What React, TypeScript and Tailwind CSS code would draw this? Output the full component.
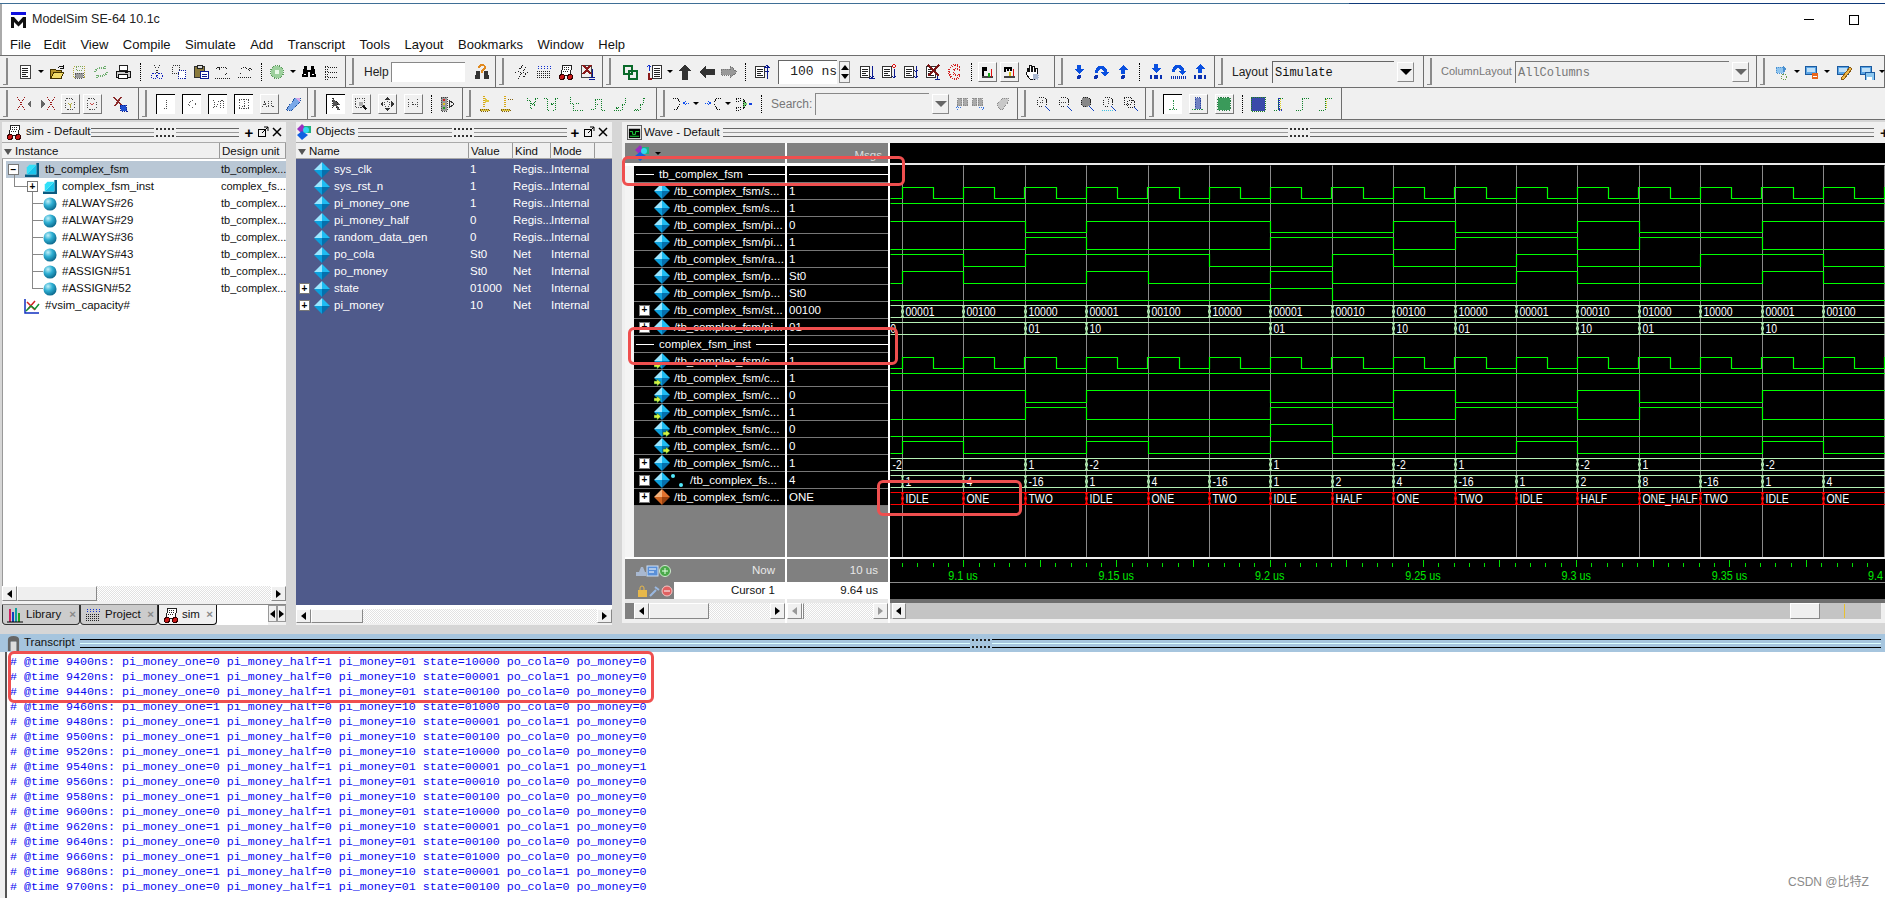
import type { ReactNode } from 'react'

const DOT = '1 1'

const Svg = ({ children, size = 'w-4 h-4' }: { children: ReactNode; size?: string }) => (
  <svg viewBox="0 0 16 16" className={size} fill="none" shapeRendering="crispEdges">
    {children}
  </svg>
)

const docLines = (
  <>
    <rect x="1.5" y="2.5" width="9" height="11" fill="#fff" stroke="#333" />
    <path d="M3 5h6M3 7h6M3 9h4M3 11h6" stroke="#222" />
  </>
)

// toolbar icons, drawn by hand on a 16x16 grid
const icons: Record<string, ReactNode> = {
  doc: (
    <>
      <rect x="3.5" y="1.5" width="10" height="13" fill="#fff" stroke="#444" />
      <path d="M5 4h6M5 6h6M5 8h6M5 10h4M5 12h6" stroke="#222" />
    </>
  ),
  folder: (
    <>
      <path d="M1 5h5l1 1h5v8H1z" fill="#b8962c" stroke="#443300" />
      <path d="M2 14 5 8h10l-3 6z" fill="#f2dc6a" stroke="#443300" />
      <path d="M9 4Q11 1 14 3M14 1v3h-3" stroke="#111" />
    </>
  ),
  save: (
    <>
      <rect x="2.5" y="2.5" width="11" height="11" stroke="#b5a83c" strokeDasharray={DOT} />
      <rect x="5" y="2" width="6" height="4" stroke="#79a35a" strokeDasharray={DOT} />
      <rect x="4" y="9" width="8" height="5" fill="#999" stroke="#555" strokeDasharray={DOT} />
    </>
  ),
  refresh: (
    <>
      <path d="M2 8Q4 3 11 4M12 2v4M14 8Q12 13 5 12M4 14v-4" stroke="#6fae6f" strokeWidth="2" strokeDasharray={DOT} />
    </>
  ),
  print: (
    <>
      <rect x="4.5" y="1.5" width="8" height="5" fill="#fff" stroke="#222" />
      <path d="M1 7h14v6H1z" fill="#ccc" stroke="#111" />
      <rect x="3" y="10" width="9" height="4" fill="#fff" stroke="#111" />
      <path d="M10 8h3" stroke="#111" />
    </>
  ),
  cut: (
    <>
      <path d="M5 1l4 8M11 1 7 9" stroke="#333" strokeDasharray={DOT} />
      <circle cx="5" cy="12" r="2.5" stroke="#1020c0" strokeDasharray={DOT} />
      <circle cx="11" cy="12" r="2.5" stroke="#1020c0" strokeDasharray={DOT} />
    </>
  ),
  copy: (
    <>
      <rect x="1.5" y="1.5" width="7" height="8" stroke="#333" strokeDasharray={DOT} />
      <rect x="7.5" y="6.5" width="7" height="8" fill="#fff" stroke="#1020a0" strokeDasharray={DOT} />
    </>
  ),
  paste: (
    <>
      <rect x="1.5" y="2.5" width="10" height="11" fill="#8a7a3c" stroke="#333" />
      <rect x="4" y="1" width="5" height="3" fill="#ddd" stroke="#222" />
      <rect x="7.5" y="7.5" width="8" height="7" fill="#fff" stroke="#0a1a90" />
      <path d="M9 10h5M9 12h5" stroke="#0a1a90" />
    </>
  ),
  undo: <path d="M1 5l3-2v4M4 5Q11 1 13 6Q14 10 8 11M0 14h15" stroke="#222" strokeDasharray={DOT} />,
  redo: <path d="M15 6l-3-2v4M12 6Q6 1 3 6Q2 9 4 10M1 13h14" stroke="#222" strokeDasharray={DOT} />,
  compile: (
    <>
      <circle cx="8" cy="8" r="6.5" fill="#9dd09d" stroke="#5a9a5a" strokeDasharray={DOT} />
      <circle cx="8" cy="8" r="2.5" fill="#e8f8e8" />
    </>
  ),
  binoc: (
    <>
      <path d="M3 2h3v4h4V2h3l2 11H9V8H7v5H1z" fill="#000" />
      <path d="M3 10h2M11 10h2" stroke="#fff" />
    </>
  ),
  findList: (
    <path d="M2 2h3v3H2zM2 7h3v3H2zM2 12h3v3H2zM7 3h7M7 8h7M7 13h7" stroke="#222" strokeDasharray={DOT} />
  ),
  helpQ: (
    <>
      <path d="M2 7h4v8H1zM10 7h4l1 8h-5z" fill="#333" />
      <path d="M4 4Q4 0 8 0T12 4Q12 6 9 7V9H7V6Q10 5 10 3.5T8 2 6 4z" fill="#e08a20" />
    </>
  ),
  zig: <path d="M9 1 4 7l4 2-4 6M12 3l-3 5 3 2-3 4M1 8h2M13 8h2" stroke="#222" strokeDasharray={DOT} />,
  grid: (
    <>
      <path d="M2 2v3M5 2v3M8 2v3M11 2v3M14 2v3" stroke="#1030d0" strokeDasharray={DOT} />
      <path d="M1 7h14M1 9h14M1 11h14M1 13h14" stroke="#222" strokeDasharray={DOT} />
    </>
  ),
  simIcon: (
    <>
      <path d="M5 1h9l-2 10H3z" fill="#fff" stroke="#222" />
      <path d="M6 3h6M6 5h5M5 7h6" stroke="#222" strokeDasharray={DOT} />
      <circle cx="4" cy="13" r="2.5" fill="#c81818" stroke="#300" />
      <circle cx="12" cy="13" r="2.5" fill="#c81818" stroke="#300" />
    </>
  ),
  docX: (
    <>
      <rect x="1.5" y="1.5" width="10" height="12" fill="#eee" stroke="#444" />
      <path d="M3 1l8 9M11 1l-8 9" stroke="#8a1a1a" strokeWidth="2" />
      <path d="M12 5v8M9 13h6M9 15h6" stroke="#0a1a90" />
    </>
  ),
  linked: (
    <>
      <rect x="1.5" y="1.5" width="8" height="8" stroke="#0a6a2a" strokeWidth="2" />
      <rect x="6.5" y="6.5" width="8" height="8" stroke="#0a6a2a" strokeWidth="2" />
    </>
  ),
  listUpDown: (
    <>
      <rect x="5.5" y="1.5" width="9" height="13" fill="#fff" stroke="#333" />
      <path d="M7 4h6M7 6h6M7 8h6M7 10h6M7 12h6" stroke="#222" />
      <path d="M2 1v6M0 3l2-2 2 2" stroke="#1030d0" />
      <path d="M2 9v6h3" stroke="#8a1a1a" strokeWidth="2" />
    </>
  ),
  up: <path d="M8 0l6 7h-3v9H5V7H2z" fill="#333" />,
  left: <path d="M0 8l7-6v3h9v6H7v3z" fill="#333" />,
  right: <path d="M16 8 9 2v3H0v6h9v3z" fill="#999" stroke="#777" strokeDasharray={DOT} />,
  docBars: (
    <>
      {docLines}
      <path d="M13 1v14M11 3h4l-2-2zM11 7h4" stroke="#0a1a90" />
    </>
  ),
  docDown: (
    <>
      {docLines}
      <path d="M13 2v12M10 14h6" stroke="#0a1a90" />
      <path d="M11 12l2 2 2-2" stroke="#0a1a90" />
    </>
  ),
  docDiamond: (
    <>
      {docLines}
      <path d="M13 5v9M11 12l2 2 2-2" stroke="#0a1a90" />
      <path d="M13 0l2 2-2 2-2-2z" stroke="#e01010" />
    </>
  ),
  docTwo: (
    <>
      {docLines}
      <path d="M13 2v12M11 6l2 2 2-2M11 12l2 2 2-2" stroke="#0a1a90" />
    </>
  ),
  docBigX: (
    <>
      {docLines}
      <path d="M3 1l11 11M14 1 3 12" stroke="#7a1414" strokeWidth="2" />
      <path d="M12 12v3M10 15h5" stroke="#0a1a90" />
    </>
  ),
  redC: (
    <path d="M13 3Q8-1 4 3T4 13Q8 17 13 13M13 6Q8 3 7 6T7 10Q9 13 13 10" stroke="#d42020" strokeWidth="2" strokeDasharray={DOT} />
  ),
  barsP: (
    <>
      <rect x="2" y="12" width="13" height="3" fill="#444" />
      <path d="M2 2h6v5H4v5H2z" fill="#000" />
      <rect x="9" y="9" width="2" height="5" fill="#10a010" />
      <rect x="12" y="4" width="2" height="10" fill="#e01010" />
    </>
  ),
  barsM: (
    <>
      <rect x="2" y="12" width="13" height="3" fill="#444" />
      <path d="M2 2h9v5H9V4H8v3H6V4H4v4H2z" fill="#000" />
      <rect x="8" y="8" width="2" height="5" fill="#d8c010" />
      <rect x="12" y="5" width="2" height="8" fill="#e01010" />
    </>
  ),
  hand: (
    <>
      <path d="M3 8V4h1v3h1V1h2v6h1V2h2v5h1V4h2v7l-2 4H6L2 10z" fill="#fff" stroke="#111" />
      <path d="M9 10h5v5H9z" fill="#aab8d0" stroke="#aab8d0" strokeDasharray={DOT} />
    </>
  ),
  stepIn: (
    <>
      <path d="M6 1h4v4h3l-5 5-5-5h3z" fill="#0a50e0" />
      <circle cx="8" cy="13" r="2" fill="#0a30b0" />
    </>
  ),
  stepOver: (
    <>
      <path d="M2 9Q2 2 8 2T14 8h2l-4 5-4-5h3Q10 5 8 5T5 9z" fill="#0a50e0" />
      <circle cx="3" cy="13" r="2" fill="#0a30b0" />
    </>
  ),
  stepOut: (
    <>
      <path d="M8 1l5 5h-3v4H6V6H3z" fill="#0a50e0" />
      <circle cx="8" cy="13" r="2" fill="#0a30b0" />
    </>
  ),
  stepInB: (
    <>
      <path d="M6 0h4v4h3l-5 5-5-5h3z" fill="#0a50e0" />
      <path d="M2 11h2v4H2zM6 11h4v4H6zM12 11h2v4h-2z" fill="#0a30b0" />
    </>
  ),
  stepOverB: (
    <>
      <path d="M2 8Q2 1 8 1T14 7h2l-4 4-4-4h3Q10 4 8 4T5 8z" fill="#0a50e0" />
      <path d="M1 12v3M3 12v3M5 12v3M7 12v3M9 12v3M11 12v3M13 12v3M15 12v3" stroke="#0a30b0" />
    </>
  ),
  stepOutB: (
    <>
      <path d="M8 0l5 5h-3v4H6V5H3z" fill="#0a50e0" />
      <path d="M2 11h2v4H2zM6 11h4v4H6zM12 11h2v4h-2z" fill="#0a30b0" />
    </>
  ),
  clusterA: (
    <>
      <path d="M2 3h8v6H2z" fill="#8fc4ee" stroke="#4a90d0" strokeDasharray={DOT} />
      <path d="M9 2l3 3-3 3z" fill="#4a90d0" />
      <circle cx="10" cy="13" r="2.5" stroke="#6a9a4a" strokeDasharray={DOT} />
    </>
  ),
  clusterB: (
    <>
      <path d="M1 2h11v8H1z" fill="#5aa4e4" stroke="#1a5aa0" />
      <path d="M3 4h8v4H3z" fill="#bfe0f8" />
      <circle cx="11" cy="12" r="3.5" fill="#e8641a" />
      <path d="M9 12h4" stroke="#fff" />
    </>
  ),
  clusterC: (
    <>
      <path d="M1 2h11v8H1z" fill="#5aa4e4" stroke="#1a5aa0" />
      <path d="M3 4h8v4H3z" fill="#bfe0f8" />
      <path d="M14 3l2 2-8 10-3 1 1-3z" fill="#eeb84a" stroke="#8a5a10" />
    </>
  ),
  clusterD: (
    <>
      <path d="M1 2h11v8H1z" fill="#5aa4e4" stroke="#1a5aa0" />
      <path d="M3 4h8v4H3z" fill="#bfe0f8" />
      <path d="M6 8h9v8H6z" fill="#8cc8f0" stroke="#1a5aa0" />
      <path d="M8 13h5v3H8z" fill="#fff" />
    </>
  ),
  xLeft: (
    <>
      <path d="M1 1l8 14M9 1 1 15" stroke="#9a1a1a" strokeDasharray={DOT} />
      <path d="M15 4l-4 4 4 4z" fill="#666" />
    </>
  ),
  xRight: (
    <>
      <path d="M7 1l8 14M15 1 7 15" stroke="#9a1a1a" strokeDasharray={DOT} />
      <path d="M1 4l4 4-4 4z" fill="#666" />
    </>
  ),
  docY: (
    <>
      <path d="M3 2h7l3 3v9H3z" stroke="#333" strokeDasharray={DOT} />
      <path d="M6 7l2 2 2-2M8 9v3" stroke="#a8a020" />
    </>
  ),
  docR: (
    <>
      <path d="M3 2h7l3 3v9H3z" stroke="#333" strokeDasharray={DOT} />
      <path d="M6 7l4 4M10 7l-4 4" stroke="#c03030" strokeDasharray={DOT} />
    </>
  ),
  xBlue: (
    <>
      <path d="M2 1l8 9M9 1 3 10" stroke="#8a2a2a" strokeWidth="1.5" />
      <path d="M8 9h6l1 6H9z" fill="#2050d0" stroke="#102090" strokeDasharray={DOT} />
    </>
  ),
  filtI: <path d="M8 3v1M8 6v7M6 13h4" stroke="#333" strokeDasharray={DOT} />,
  filtO: <circle cx="8" cy="8" r="3.5" stroke="#444" strokeDasharray={DOT} />,
  filtIO: <path d="M2 4h3M3.5 4v8M2 12h3M6 13l3-9M11 4h3v8h-3z" stroke="#333" strokeDasharray={DOT} />,
  filtB: (
    <>
      <rect x="2.5" y="2.5" width="11" height="11" stroke="#333" strokeDasharray={DOT} />
      <path d="M8 5v6M6 11h4" stroke="#333" strokeDasharray={DOT} />
    </>
  ),
  filtAll: <path d="M1 11 3 5l2 6M2 9h2M7 5v6h2M11 5v6h3" stroke="#333" strokeDasharray={DOT} />,
  rainbow: (
    <>
      <path d="M1 14 10 2h5v4L6 15z" fill="#7aa8e8" stroke="#2050a0" strokeDasharray={DOT} />
      <path d="M10 2h5v4z" fill="#d8a8e8" />
    </>
  ),
  pointer: <path d="M4 1v12l3-3 3 5 2-1-3-5h4z" fill="#555" stroke="#111" strokeDasharray={DOT} />,
  zoomBox: (
    <>
      <rect x="1.5" y="1.5" width="10" height="10" stroke="#333" strokeDasharray={DOT} />
      <path d="M8 8l6 6" stroke="#111" strokeWidth="2" />
      <circle cx="8" cy="8" r="2.5" fill="#aaa" />
    </>
  ),
  move: (
    <>
      <path d="M8 0l3 3H5zM8 16l3-3H5zM0 8l3-3v6zM16 8l-3-3v6z" fill="#333" />
      <circle cx="8" cy="8" r="3" stroke="#333" strokeDasharray={DOT} />
    </>
  ),
  ruler: (
    <>
      <path d="M3 2v12M13 2v12" stroke="#333" strokeDasharray={DOT} />
      <path d="M7 4v5h5" stroke="#222" strokeDasharray={DOT} />
    </>
  ),
  signal: (
    <>
      <path d="M2 1h6v14H2z" fill="#999" stroke="#444" strokeDasharray={DOT} />
      <circle cx="5" cy="4" r="1.5" fill="#d02020" />
      <circle cx="5" cy="8" r="1.5" fill="#e0c020" />
      <circle cx="5" cy="12" r="1.5" fill="#20a020" />
      <path d="M10 4l5 4-5 4z" stroke="#333" />
    </>
  ),
  cursorA: (
    <>
      <path d="M5 0v12" stroke="#d8a818" strokeWidth="2" strokeDasharray={DOT} />
      <path d="M6 2l5 3-5 2z" fill="#e0c840" />
      <path d="M1 13h9v2H1z" fill="#d8c040" stroke="#806010" strokeDasharray={DOT} />
    </>
  ),
  cursorB: (
    <>
      <path d="M5 0v12" stroke="#d8a818" strokeWidth="2" strokeDasharray={DOT} />
      <path d="M8 3h5" stroke="#806010" strokeDasharray={DOT} />
      <path d="M1 13h9v2H1z" fill="#d8c040" stroke="#806010" strokeDasharray={DOT} />
    </>
  ),
  edgeA: <path d="M2 2v2h3v8h3M13 2h-3v4M9 7l-3 1 3 1z" stroke="#10802a" strokeDasharray={DOT} />,
  edgeB: <path d="M1 2h3v12h3M15 2h-3v12h-2M8 7l3 1-3 1z" stroke="#10802a" strokeDasharray={DOT} />,
  edgeC: <path d="M2 1v6h3v7h5M8 7h4M12 14h3" stroke="#10802a" strokeDasharray={DOT} />,
  edgeD: <path d="M1 13h4V3h6v11h4M5 8h3" stroke="#10802a" strokeDasharray={DOT} />,
  edgeE: <path d="M13 2v6h-3v6H2M4 11l3 1-3 1z" stroke="#10802a" strokeDasharray={DOT} />,
  edgeF: <path d="M2 14h6V8h3V2h3M3 13h4" stroke="#10802a" strokeDasharray={DOT} />,
  fanIn: (
    <>
      <path d="M0 2h4l4 5-4 6H0" stroke="#111" strokeDasharray={DOT} />
      <path d="M16 7H10M13 5l-3 2 3 2" stroke="#1050f0" strokeDasharray={DOT} />
    </>
  ),
  fanOut: (
    <>
      <path d="M16 2h-4L8 7l4 6h4" stroke="#111" strokeDasharray={DOT} />
      <path d="M0 7h6M3 5l3 2-3 2" stroke="#1050f0" strokeDasharray={DOT} />
    </>
  ),
  cross: (
    <>
      <path d="M0 2h4v3H0zM0 11h4v3H0z" stroke="#111" strokeDasharray={DOT} />
      <path d="M7 3l4 5-4 5z" fill="#70d070" stroke="#111" strokeDasharray={DOT} />
      <path d="M13 7h3v2h-3z" fill="#1040e0" />
    </>
  ),
  findA: (
    <>
      <path d="M3 2h4v8H2zM9 2h4l1 8H9z" fill="#aaa" stroke="#888" strokeDasharray={DOT} />
      <path d="M1 12h5M1 12l2-2M1 12l2 2" stroke="#3070e0" strokeDasharray={DOT} />
    </>
  ),
  findB: (
    <>
      <path d="M3 2h4v8H2zM9 2h4l1 8H9z" fill="#aaa" stroke="#888" strokeDasharray={DOT} />
      <path d="M10 12h5M15 12l-2-2M15 12l-2 2" stroke="#3070e0" strokeDasharray={DOT} />
    </>
  ),
  findC: <path d="M2 8 8 2h6v4l-6 8H5z" fill="#c8c8c8" stroke="#888" strokeDasharray={DOT} />,
  zoomIn: (
    <>
      <circle cx="7" cy="6" r="5" stroke="#222" strokeDasharray={DOT} />
      <path d="M5 6h4M7 4v4" stroke="#444" strokeDasharray={DOT} />
      <path d="M10 10l5 5" stroke="#1040c0" />
    </>
  ),
  zoomOut: (
    <>
      <circle cx="7" cy="6" r="5" stroke="#222" strokeDasharray={DOT} />
      <path d="M4 6h6" stroke="#444" strokeDasharray={DOT} />
      <path d="M10 10l5 5" stroke="#1040c0" />
    </>
  ),
  zoomFull: (
    <>
      <circle cx="7" cy="6" r="5" fill="#888" stroke="#222" strokeDasharray={DOT} />
      <path d="M10 10l5 5" stroke="#1040c0" />
    </>
  ),
  zoomCur: (
    <>
      <circle cx="7" cy="6" r="5" stroke="#222" strokeDasharray={DOT} />
      <path d="M7 3v5" stroke="#444" strokeDasharray={DOT} />
      <path d="M1 14h12" stroke="#40c0e0" strokeDasharray={DOT} />
      <path d="M10 10l5 5" stroke="#1040c0" />
    </>
  ),
  zoomArea: (
    <>
      <path d="M1 1h7v7H1z" stroke="#222" strokeDasharray={DOT} />
      <circle cx="8" cy="8" r="4" stroke="#222" strokeDasharray={DOT} />
      <path d="M11 11l4 4" stroke="#1040c0" />
    </>
  ),
  waveA: <path d="M8 3v11M3 14h10" stroke="#108030" strokeDasharray={DOT} />,
  waveB: (
    <>
      <path d="M5 1h6v13H5z" fill="#7080c0" stroke="#1a3a9a" strokeDasharray={DOT} />
      <path d="M1 14h14" stroke="#108030" strokeDasharray={DOT} />
    </>
  ),
  waveC: <rect x="1" y="1" width="14" height="14" fill="#3a9a5a" stroke="#0a6a2a" strokeDasharray={DOT} />,
  waveD: <rect x="1" y="1" width="14" height="14" fill="#3a4aaa" stroke="#208020" strokeDasharray={DOT} />,
  stepA: (
    <>
      <path d="M1 14h4V2h5" stroke="#10802a" strokeDasharray={DOT} />
      <path d="M6 2v12h3" stroke="#2030c0" strokeWidth="2" strokeDasharray={DOT} />
      <path d="M7 3v11" stroke="#e0d020" strokeDasharray={DOT} />
    </>
  ),
  stepB: <path d="M1 14h6V2h7" stroke="#10802a" strokeDasharray={DOT} />,
  stepC: (
    <>
      <path d="M1 14h6V2h7" stroke="#10802a" strokeDasharray={DOT} />
      <path d="M8 3v10" stroke="#e0d020" strokeDasharray={DOT} />
    </>
  ),
}

const Cell = ({ id, w = 'w-[22px]', ml = '' }: { id: string; w?: string; ml?: string }) => (
  <div className={`flex items-center justify-center shrink-0 ${w} ${ml}`}>
    <Svg>{icons[id]}</Svg>
  </div>
)

const Caret = ({ w = 'w-[10px]' }: { w?: string }) => (
  <div className={`flex items-center justify-center shrink-0 ${w}`}>
    <div className="w-0 h-0 border-x-[3px] border-x-transparent border-t-[3px] border-t-black" />
  </div>
)

const Sep = ({ w = 'w-[10px]', ml = '' }: { w?: string; ml?: string }) => (
  <div className={`flex justify-center shrink-0 ${w} ${ml}`}>
    <div className="h-[18px] border-l border-dotted border-black" />
  </div>
)

const Boxed = ({ id, pressed, w = 'w-[26px]' }: { id: string; pressed?: boolean; w?: string }) => (
  <div className={`flex items-center justify-center shrink-0 ${w}`}>
    <div
      className={
        pressed
          ? 'flex items-center justify-center w-[19px] h-[20px] bg-white border-t border-l border-black'
          : 'flex items-center justify-center w-[19px] h-[20px] border-t border-l border-white border-b border-r border-b-[#777] border-r-[#777]'
      }
    >
      <Svg size="w-[14px] h-[14px]">{icons[id]}</Svg>
    </div>
  </div>
)

const Group = ({ w, children, first }: { w: string; children: ReactNode; first?: string }) => (
  <div className={`flex items-center h-full border-r border-[#6e6e6e] shrink-0 ${w}`}>
    <div className="ml-[3px] w-[5px] h-[27px] border-r-2 border-b border-[#8a8a8a] shrink-0" />
    <div className={`flex items-center ${first ?? ''}`}>{children}</div>
  </div>
)

const DropBtn = ({ dim }: { dim?: boolean }) => (
  <div className="ml-[3px] w-[17px] h-[20px] flex items-center justify-center bg-[#f0f0f0] border border-[#888] border-t-white border-l-white shrink-0">
    <div className={`w-0 h-0 border-x-[6px] border-x-transparent border-t-[6px] ${dim ? 'border-t-[#666]' : 'border-t-black'}`} />
  </div>
)

const Toolbars = () => (
  <div className="shrink-0 text-[12px]">
    <div className="flex h-[32px] border-t border-[#6e6e6e]">
      <Group w="w-[346px]" first="ml-[6px]">
        <Cell id="doc" />
        <Caret />
        <Cell id="folder" />
        <Cell id="save" />
        <Cell id="refresh" />
        <Cell id="print" />
        <Sep w="w-[12px]" />
        <Cell id="cut" />
        <Cell id="copy" />
        <Cell id="paste" />
        <Cell id="undo" />
        <Cell id="redo" />
        <Sep />
        <Cell id="compile" />
        <Caret />
        <Cell id="binoc" />
        <Cell id="findList" />
      </Group>
      <Group w="w-[150px]" first="ml-[10px]">
        <span className="w-[27px] text-[#222]">Help</span>
        <div className="w-[74px] h-[20px] bg-white border-t border-l border-[#888]" />
        <Cell id="helpQ" ml="ml-[6px]" />
      </Group>
      <Group w="w-[107px]" first="ml-[7px]">
        <Cell id="zig" />
        <Cell id="grid" />
        <Cell id="simIcon" />
        <Cell id="docX" />
      </Group>
      <Group w="w-[452px]" first="ml-[8px]">
        <Cell id="linked" />
        <Cell id="listUpDown" ml="ml-[3px]" />
        <Caret w="w-[8px]" />
        <Cell id="up" />
        <Cell id="left" />
        <Cell id="right" />
        <Sep />
        <Cell id="docBars" ml="ml-[1px]" />
        <div className="ml-[5px] w-[59px] h-[24px] bg-white border-t border-l border-[#666] flex items-center justify-end font-['Liberation_Mono',monospace] text-[13px] text-[#222]">
          100 ns
        </div>
        <div className="ml-[2px] w-[11px] h-[22px] flex flex-col items-center justify-between py-[3px] border border-[#888] shrink-0">
          <div className="w-0 h-0 border-x-[4px] border-x-transparent border-b-[5px] border-b-black" />
          <div className="w-0 h-0 border-x-[4px] border-x-transparent border-t-[5px] border-t-black" />
        </div>
        <Cell id="docDown" ml="ml-[6px]" />
        <Cell id="docDiamond" />
        <Cell id="docTwo" />
        <Cell id="docBigX" />
        <Cell id="redC" />
        <Sep />
        <Boxed id="barsP" w="w-[22px]" />
        <Boxed id="barsM" w="w-[22px]" />
        <Cell id="hand" ml="ml-[1px]" />
      </Group>
      <Group w="w-[160px]" first="ml-[5px]">
        <Cell id="stepIn" />
        <Cell id="stepOver" />
        <Cell id="stepOut" />
        <Sep />
        <Cell id="stepInB" ml="ml-[1px]" />
        <Cell id="stepOverB" />
        <Cell id="stepOutB" />
      </Group>
      <Group w="w-[209px]" first="ml-[9px]">
        <span className="w-[40px] text-[#222]">Layout</span>
        <div className="w-[122px] h-[22px] bg-[#f0f0f0] border-t border-l border-[#666] pl-[2px] font-['Liberation_Mono',monospace] text-[12px] leading-[22px] text-[#111]">
          Simulate
        </div>
        <DropBtn />
      </Group>
      <Group w="w-[333px]" first="ml-[9px]">
        <span className="w-[74px] text-[11px] text-[#777] whitespace-nowrap">ColumnLayout</span>
        <div className="w-[214px] h-[22px] bg-[#f0f0f0] border-t border-l border-[#777] pl-[2px] font-['Liberation_Mono',monospace] text-[12px] leading-[22px] text-[#777]">
          AllColumns
        </div>
        <DropBtn dim />
      </Group>
      <Group w="w-[128px]" first="ml-[6px]">
        <Cell id="clusterA" />
        <Caret w="w-[8px]" />
        <Cell id="clusterB" />
        <Caret w="w-[8px]" />
        <Cell id="clusterC" ml="ml-[2px]" />
        <Cell id="clusterD" ml="ml-[1px]" />
        <Caret w="w-[7px]" />
      </Group>
    </div>
    <div className="flex h-[33px] border-y border-[#6e6e6e]">
      <Group w="w-[139px]" first="ml-[5px]">
        <Cell id="xLeft" />
        <Cell id="xRight" ml="ml-[2px]" />
        <Boxed id="docY" w="w-[22px]" />
        <Boxed id="docR" w="w-[22px]" />
        <Cell id="xBlue" ml="ml-[6px]" />
      </Group>
      <Group w="w-[169px]" first="ml-[5px]">
        <Boxed id="filtI" pressed />
        <Boxed id="filtO" pressed />
        <Boxed id="filtIO" pressed />
        <Boxed id="filtB" pressed />
        <Boxed id="filtAll" />
        <Cell id="rainbow" />
      </Group>
      <Group w="w-[155px]" first="ml-[6px]">
        <Boxed id="pointer" pressed />
        <Boxed id="zoomBox" />
        <Boxed id="move" />
        <Boxed id="ruler" />
        <Sep />
        <Cell id="signal" />
      </Group>
      <Group w="w-[194px]" first="ml-[7px]">
        <Cell id="cursorA" w="w-[18px]" />
        <Cell id="cursorB" w="w-[18px]" ml="ml-[3px]" />
        <Cell id="edgeA" w="w-[18px]" ml="ml-[7px]" />
        <Cell id="edgeB" w="w-[18px]" />
        <Cell id="edgeC" w="w-[18px]" ml="ml-[7px]" />
        <Cell id="edgeD" w="w-[18px]" ml="ml-[4px]" />
        <Cell id="edgeE" w="w-[18px]" ml="ml-[4px]" />
        <Cell id="edgeF" w="w-[18px]" ml="ml-[2px]" />
      </Group>
      <Group w="w-[361px]" first="ml-[5px]">
        <Cell id="fanIn" />
        <Caret w="w-[8px]" />
        <Cell id="fanOut" ml="ml-[2px]" />
        <Caret w="w-[8px]" />
        <Cell id="cross" ml="ml-[1px]" />
        <Sep ml="ml-[1px]" />
        <span className="ml-[5px] w-[44px] text-[#777]">Search:</span>
        <div className="w-[114px] h-[22px] bg-[#f0f0f0] border-t border-l border-[#888]" />
        <DropBtn dim />
        <Cell id="findA" w="w-[15px]" ml="ml-[6px]" />
        <Cell id="findB" w="w-[15px]" />
        <Cell id="findC" w="w-[15px]" ml="ml-[10px]" />
      </Group>
      <Group w="w-[128px]" first="ml-[6px]">
        <Cell id="zoomIn" />
        <Cell id="zoomOut" />
        <Cell id="zoomFull" />
        <Cell id="zoomCur" />
        <Cell id="zoomArea" />
      </Group>
      <Group w="w-[196px]" first="ml-[5px]">
        <Boxed id="waveA" pressed />
        <Boxed id="waveB" />
        <Boxed id="waveC" />
        <Sep />
        <Cell id="waveD" />
        <Cell id="stepA" ml="ml-[1px]" />
        <Cell id="stepB" />
        <Cell id="stepC" ml="ml-[1px]" />
      </Group>
    </div>
  </div>
)

const Grip = ({ w, dark }: { w: string; dark?: boolean }) => (
  <div className={`flex items-center shrink-0 ${w}`}>
    <div className={`flex-1 h-[9px] border-y ${dark ? 'border-black' : 'border-[#666]'} flex items-center`}>
      <div className={`w-full border-t ${dark ? 'border-[#dff]' : 'border-[#999]'}`} />
    </div>
    <div className={`w-[18px] h-[9px] border-y-2 border-dotted mx-[2px] ${dark ? 'border-[#222]' : 'border-[#333]'}`} />
    <div className={`flex-1 h-[9px] border-y ${dark ? 'border-black' : 'border-[#666]'} flex items-center`}>
      <div className={`w-full border-t ${dark ? 'border-[#dff]' : 'border-[#999]'}`} />
    </div>
  </div>
)

const HeadBtns = () => (
  <div className="flex items-center ml-auto mr-[2px] text-black">
    <span className="w-[14px] text-center font-bold text-[15px] leading-none">+</span>
    <svg viewBox="0 0 12 12" className="w-[14px] h-[12px]" fill="none">
      <rect x="1.5" y="3.5" width="7" height="7" stroke="#000" />
      <path d="M5 7l6-6M7 1h4v4" stroke="#000" />
    </svg>
    <svg viewBox="0 0 12 12" className="w-[14px] h-[12px]" fill="none">
      <path d="M2 2l8 8M10 2l-8 8" stroke="#000" strokeWidth="1.5" />
    </svg>
  </div>
)

const Diamond = ({ tone = 'blue', arrow }: { tone?: 'blue' | 'orange'; arrow?: 'in' | 'out' }) => {
  const c = tone === 'blue' ? ['#9be6ff', '#1fbcf2', '#0b9fdc', '#0570ad'] : ['#f3b27c', '#e0722e', '#cf6420', '#9a4310']
  return (
    <svg viewBox="0 0 16 16" className="w-[16px] h-[16px] shrink-0">
      <path d="M8 0 8 8 0 8z" fill={c[0]} />
      <path d="M8 0 16 8 8 8z" fill={c[1]} />
      <path d="M0 8 8 8 8 16z" fill={c[2]} />
      <path d="M16 8 8 8 8 16z" fill={c[3]} />
      {arrow === 'in' && <path d="M0 11h3V9l4 3.500-4 3.500v-2H0z" fill="#d8f040" stroke="#107030" strokeWidth=".5" />}
      {arrow === 'out' && <path d="M9 11h3V9l4 3.500-4 3.500v-2H9z" fill="#d8f040" stroke="#107030" strokeWidth=".5" />}
    </svg>
  )
}

const Ball = () => (
  <svg viewBox="0 0 16 16" className="w-[14px] h-[14px] shrink-0">
    <defs>
      <radialGradient id="ballFill" cx="35%" cy="30%" r="75%">
        <stop offset="0%" stopColor="#c4f0f8" />
        <stop offset="45%" stopColor="#2fb0d4" />
        <stop offset="100%" stopColor="#0a6488" />
      </radialGradient>
    </defs>
    <circle cx="8" cy="8" r="7.5" fill="url(#ballFill)" />
  </svg>
)

const ModuleIcon = () => (
  <svg viewBox="0 0 16 16" className="w-[14px] h-[14px] shrink-0">
    <path d="M13 0h3v16H0v-3h13z" fill="#0a5a80" />
    <path d="M13 2v11H2z" fill="#18c4ec" />
    <path d="M2 13 13 2H5L2 5z" fill="#30e0f8" />
  </svg>
)

const PlusBox = ({ minus }: { minus?: boolean }) => (
  <div className="w-[11px] h-[11px] flex items-center justify-center bg-white border border-[#777] text-black text-[10px] leading-none font-bold shrink-0">
    {minus ? '−' : '+'}
  </div>
)

const ColHead = ({ w, children }: { w: string; children?: ReactNode }) => (
  <div className={`h-full border-r border-[#999] pl-[2px] leading-[16px] whitespace-nowrap overflow-hidden shrink-0 ${w}`}>{children}</div>
)

const simRows = ['#ALWAYS#26', '#ALWAYS#29', '#ALWAYS#36', '#ALWAYS#43', '#ASSIGN#51', '#ASSIGN#52']

const Triangle = ({ dir, dim }: { dir: 'l' | 'r'; dim?: boolean }) => (
  <div
    className={
      dir === 'l'
        ? `w-0 h-0 border-y-[4px] border-y-transparent border-r-[5px] ${dim ? 'border-r-[#999]' : 'border-r-black'}`
        : `w-0 h-0 border-y-[4px] border-y-transparent border-l-[5px] ${dim ? 'border-l-[#999]' : 'border-l-black'}`
    }
  />
)

const ArrowBtn = ({ dir, dim }: { dir: 'l' | 'r'; dim?: boolean }) => (
  <div className="w-[15px] h-full flex items-center justify-center bg-[#f0f0f0] border border-white border-b-[#888] border-r-[#888] shrink-0">
    <Triangle dir={dir} dim={dim} />
  </div>
)

const ScrollBar = ({ thumb, dim, h = 'h-[15px]' }: { thumb: string; dim?: boolean; h?: string }) => (
  <div className={`flex shrink-0 ${h}`}>
    <ArrowBtn dir="l" dim={dim} />
    <div className={`h-full bg-[#efefef] border border-white border-b-[#888] border-r-[#888] shrink-0 ${thumb}`} />
    <div className="flex-1 h-full bg-[repeating-conic-gradient(#fff_0_25%,#e2e2e2_0_50%)] bg-[length:2px_2px]" />
    <ArrowBtn dir="r" dim={dim} />
  </div>
)

const SimPanel = () => (
  <div className="w-[284px] h-[503px] ml-[2px] flex flex-col bg-[#f0f0f0] shrink-0">
    <div className="h-[20px] flex items-center shrink-0">
      <div className="ml-[4px]">
        <Svg>{icons.simIcon}</Svg>
      </div>
      <span className="ml-[4px] w-[65px] whitespace-nowrap shrink-0">sim - Default</span>
      <Grip w="w-[148px]" />
      <HeadBtns />
    </div>
    <div className="h-[17px] flex border-y border-[#aaa] shrink-0">
      <ColHead w="w-[218px]">
        <span className="inline-block w-0 h-0 border-x-[4px] border-x-transparent border-t-[6px] border-t-[#555] mr-[3px]" />
        Instance
      </ColHead>
      <ColHead w="w-[66px]">Design unit</ColHead>
    </div>
    <div className="flex-1 min-h-0 bg-white border-l border-[#999] pt-[2px] relative overflow-hidden">
      <div className="absolute left-[11px] top-[16px] w-px h-[11px] bg-[#888]" />
      <div className="absolute left-[11px] top-[27px] w-[13px] h-px bg-[#888]" />
      <div className="absolute left-[29px] top-[33px] w-px h-[96px] bg-[#888]" />
      <div className="h-[17px] flex items-center bg-[#b9c7d5] ml-[3px]">
        <div className="ml-[2px] w-[17px] shrink-0"><PlusBox minus /></div>
        <ModuleIcon />
        <span className="ml-[6px] w-[176px] shrink-0 whitespace-nowrap">tb_complex_fsm</span>
        <span className="text-[11px] whitespace-nowrap">tb_complex...</span>
      </div>
      <div className="h-[17px] flex items-center ml-[3px]">
        <div className="ml-[21px] w-[16px] shrink-0 relative"><PlusBox /></div>
        <ModuleIcon />
        <span className="ml-[5px] w-[159px] shrink-0 whitespace-nowrap">complex_fsm_inst</span>
        <span className="text-[11px] whitespace-nowrap">complex_fs...</span>
      </div>
      {simRows.map((name) => (
        <div key={name} className="h-[17px] flex items-center">
          <div className="ml-[29px] w-[11px] border-t border-[#888] shrink-0" />
          <Ball />
          <span className="ml-[5px] w-[159px] shrink-0">{name}</span>
          <span className="text-[11px] whitespace-nowrap">tb_complex...</span>
        </div>
      ))}
      <div className="h-[17px] flex items-center">
        <svg viewBox="0 0 16 16" className="ml-[21px] w-[16px] h-[16px] shrink-0" fill="none">
          <path d="M1 1v14h14" stroke="#1030c0" strokeWidth="1.5" />
          <path d="M3 4l8 8M11 3l-7 8" stroke="#d02020" strokeWidth="1.5" />
          <path d="M2 13 7 8l4 3 4-5" stroke="#109030" strokeWidth="1.5" />
        </svg>
        <span className="ml-[5px]">#vsim_capacity#</span>
      </div>
    </div>
    <ScrollBar thumb="w-[80px]" />
    <div className="h-[3px] bg-[#f0f0f0] shrink-0" />
    <div className="h-[21px] flex shrink-0 border-t border-[#888]">
      <div className="w-[78px] flex items-center rounded-b-[4px] bg-[#cccccc] border border-t-0 border-[#333] shrink-0">
        <svg viewBox="0 0 16 16" className="ml-[4px] w-[16px] h-[16px] shrink-0">
          <path d="M2 2h2v13H2z" fill="#d02060" />
          <path d="M5 5h2v10H5z" fill="#1040c0" />
          <path d="M8 1h2v14H8z" fill="#10a0a0" />
          <path d="M11 6h2v9h-2z" fill="#20a020" />
          <path d="M0 15h16" stroke="#000" />
        </svg>
        <span className="ml-[3px]">Library</span>
        <span className="ml-auto mr-[3px] text-[#888] font-bold">×</span>
      </div>
      <div className="w-[78px] flex items-center rounded-b-[4px] bg-[#cccccc] border border-t-0 border-[#333] shrink-0">
        <div className="ml-[4px]"><Svg>{icons.grid}</Svg></div>
        <span className="ml-[4px]">Project</span>
        <span className="ml-auto mr-[3px] text-[#888] font-bold">×</span>
      </div>
      <div className="w-[59px] flex items-center rounded-b-[4px] bg-[#f0f0f0] border border-t-0 border-[#111] shrink-0">
        <div className="ml-[4px]"><Svg>{icons.simIcon}</Svg></div>
        <span className="ml-[3px]">sim</span>
        <span className="ml-auto mr-[3px] text-[#888] font-bold">×</span>
      </div>
      <div className="flex-1 bg-white" />
      <div className="h-[17px] flex">
        <div className="w-[9px] flex items-center justify-center border border-[#999]"><Triangle dir="l" /></div>
        <div className="w-[9px] flex items-center justify-center border border-[#999]"><Triangle dir="r" /></div>
      </div>
    </div>
  </div>
)

const objRows = [
  { name: 'sys_clk', value: '1', kind: 'Regis...' },
  { name: 'sys_rst_n', value: '1', kind: 'Regis...' },
  { name: 'pi_money_one', value: '1', kind: 'Regis...' },
  { name: 'pi_money_half', value: '0', kind: 'Regis...' },
  { name: 'random_data_gen', value: '0', kind: 'Regis...' },
  { name: 'po_cola', value: 'St0', kind: 'Net' },
  { name: 'po_money', value: 'St0', kind: 'Net' },
  { name: 'state', value: '01000', kind: 'Net', plus: true },
  { name: 'pi_money', value: '10', kind: 'Net', plus: true },
]

const ObjectsPanel = () => (
  <div className="w-[316px] h-[503px] ml-[10px] flex flex-col bg-[#f0f0f0] shrink-0">
    <div className="h-[20px] flex items-center shrink-0">
      <svg viewBox="0 0 16 16" className="ml-[1px] w-[16px] h-[16px] shrink-0">
        <path d="M5 0l5 5-5 5-5-5z" fill="#9a30c0" />
        <rect x="7" y="2" width="7" height="7" fill="#20b080" />
        <path d="M5 7l6 4-6 5-5-5z" fill="#1060e0" />
        <circle cx="9" cy="6" r="3" fill="#30d8f0" />
      </svg>
      <span className="ml-[3px] w-[42px] shrink-0">Objects</span>
      <Grip w="w-[209px]" />
      <HeadBtns />
    </div>
    <div className="h-[17px] flex border-y border-[#aaa] shrink-0">
      <ColHead w="w-[173px]">
        <span className="inline-block w-0 h-0 border-x-[4px] border-x-transparent border-t-[6px] border-t-[#555] mr-[3px]" />
        Name
      </ColHead>
      <ColHead w="w-[44px]">Value</ColHead>
      <ColHead w="w-[38px]">Kind</ColHead>
      <ColHead w="w-[44px]">Mode</ColHead>
    </div>
    <div className="h-[446px] bg-[#4f5a8b] text-white pt-[2px] shrink-0">
      {objRows.map((r) => (
        <div key={r.name} className="h-[17px] flex items-center">
          <div className="w-[18px] ml-[3px] flex items-center"><div className={r.plus ? 'flex items-center' : 'invisible'}><PlusBox /></div></div>
          <div className="w-[16px] ml-[-3px]"><Diamond /></div>
          <span className="ml-[4px] w-[136px]">{r.name}</span>
          <span className="w-[43px]">{r.value}</span>
          <span className="w-[38px]">{r.kind}</span>
          <span>Internal</span>
        </div>
      ))}
    </div>
    <div className="h-[4px] bg-white shrink-0" />
    <ScrollBar thumb="w-[52px]" h="h-[14px]" />
  </div>
)

type WaveRow = {
  name: string
  value: string
  plus?: boolean
  arrow?: 'in' | 'out'
  tone?: 'blue' | 'orange'
  dots?: boolean
  group?: boolean
}

const waveRows: WaveRow[] = [
  { name: 'tb_complex_fsm', value: '', group: true },
  { name: '/tb_complex_fsm/s...', value: '1' },
  { name: '/tb_complex_fsm/s...', value: '1' },
  { name: '/tb_complex_fsm/pi...', value: '0' },
  { name: '/tb_complex_fsm/pi...', value: '1' },
  { name: '/tb_complex_fsm/ra...', value: '1' },
  { name: '/tb_complex_fsm/p...', value: 'St0' },
  { name: '/tb_complex_fsm/p...', value: 'St0' },
  { name: '/tb_complex_fsm/st...', value: '00100', plus: true },
  { name: '/tb_complex_fsm/pi...', value: '01', plus: true },
  { name: 'complex_fsm_inst', value: '', group: true },
  { name: '/tb_complex_fsm/c...', value: '1', arrow: 'in' },
  { name: '/tb_complex_fsm/c...', value: '1', arrow: 'in' },
  { name: '/tb_complex_fsm/c...', value: '0', arrow: 'in' },
  { name: '/tb_complex_fsm/c...', value: '1', arrow: 'in' },
  { name: '/tb_complex_fsm/c...', value: '0', arrow: 'out' },
  { name: '/tb_complex_fsm/c...', value: '0', arrow: 'out' },
  { name: '/tb_complex_fsm/c...', value: '1', plus: true },
  { name: '/tb_complex_fs...', value: '4', plus: true, dots: true },
  { name: '/tb_complex_fsm/c...', value: 'ONE', plus: true, tone: 'orange' },
]

// grid of the wave window: one clock period is 61.4px
const GRID = Array.from({ length: 17 }, (_, k) => Math.round(902 + 61.4 * k))
const X0 = 890
const X1 = 1885

const edge = (i: number) => (i === 0 ? X0 : i > 16 ? X1 : GRID[i - 1])

const binaryPath = (vals: number[], hi: number, lo: number) => {
  let d = `M${X0} ${vals[0] ? hi : lo}`
  vals.forEach((v, i) => {
    const y = v ? hi : lo
    d += `V${y}H${edge(i + 1)}`
  })
  return d
}

const ONE = [1, 1, 1, 0, 1, 1, 1, 0, 0, 1, 0, 0, 1, 0, 0, 1, 1]
const HALF = ONE.map((v) => 1 - v)
const RAND = [1, 1, 0, 1, 1, 1, 0, 0, 1, 0, 0, 1, 0, 0, 1, 1, 0]
const COLA = [0, 1, 0, 0, 1, 0, 0, 1, 0, 0, 0, 1, 0, 0, 0, 1, 0]
const MONEY = [0, 0, 0, 0, 0, 0, 0, 1, 0, 0, 0, 0, 0, 0, 0, 0, 0]

const clockPath = (hi: number, lo: number) => {
  let d = `M${X0} ${lo}H${GRID[0]}`
  GRID.forEach((x) => {
    d += `V${hi}H${x + 31}V${lo}H${x + 61}`
  })
  return d
}

const STATE: [number, string][] = ['00001', '00100', '10000', '00001', '00100', '10000', '00001', '00010', '00100', '10000', '00001', '00010', '01000', '10000', '00001', '00100'].map((s, k) => [k, s])
const PIMONEY: [number, string][] = [[2, '01'], [3, '10'], [6, '01'], [8, '10'], [9, '01'], [11, '10'], [12, '01'], [14, '10']]
const DIFF: [number, string][] = [[2, '1'], [3, '-2'], [6, '1'], [8, '-2'], [9, '1'], [11, '-2'], [12, '1'], [14, '-2']]
const DELTA: [number, string][] = ['1', '4', '-16', '1', '4', '-16', '1', '2', '4', '-16', '1', '2', '8', '-16', '1', '4'].map((s, k) => [k, s])
const FSM: [number, string][] = ['IDLE', 'ONE', 'TWO', 'IDLE', 'ONE', 'TWO', 'IDLE', 'HALF', 'ONE', 'TWO', 'IDLE', 'HALF', 'ONE_HALF', 'TWO', 'IDLE', 'ONE'].map((s, k) => [k, s])

const BusLabel = ({ x, y, children }: { x: number; y: number; children: string }) => (
  <text transform={`translate(${x} ${y}) scale(0.87 1)`} fill="#fff" fontSize="12" fontFamily="'Liberation Sans',sans-serif">
    {children}
  </text>
)

const Bus = ({ top, items, color, start, startX = X0 + 2 }: { top: number; items: [number, string][]; color: string; start?: string; startX?: number }) => {
  const bot = top + 12
  return (
    <g>
      <path d={`M${X0} ${top}H${X1}M${X0} ${bot}H${X1}`} stroke={color} />
      {items.map(([k, label]) => (
        <g key={k}>
          <path d={`M${GRID[k] - 1} ${top}L${GRID[k] + 1} ${top + 6}L${GRID[k] - 1} ${bot}M${GRID[k] + 1} ${top}L${GRID[k] - 1} ${top + 6}L${GRID[k] + 1} ${bot}`} stroke={color} fill="none" />
          <BusLabel x={GRID[k] + 3} y={top + 10.5}>{label}</BusLabel>
        </g>
      ))}
      {start && <BusLabel x={startX} y={top + 10.5}>{start}</BusLabel>}
    </g>
  )
}

const GREEN = '#00ff00'
const PALE = '#b4f0b4'

const WaveChart = () => {
  const ticks = Array.from({ length: 64 }, (_, i) => i)
  const labels = ['9.1 us', '9.15 us', '9.2 us', '9.25 us', '9.3 us', '9.35 us', '9.4 us']
  return (
    <svg viewBox="890 143 995 456" className="w-[995px] h-[456px] block shrink-0 bg-black">
      <rect x="890" y="163" width="995" height="2" fill="#e8e8e8" />
      <g transform="translate(.5 .5)" strokeWidth="1.2">
        {GRID.map((x) => (
          <path key={x} d={`M${x} 165V557`} stroke="#8a8a8a" strokeWidth="1" />
        ))}
        <path d={clockPath(187, 198)} stroke={GREEN} fill="none" />
        <path d={`M${X0} 203H${X1}`} stroke={GREEN} />
        <path d={binaryPath(ONE, 221, 232)} stroke={GREEN} fill="none" />
        <path d={binaryPath(HALF, 237, 249)} stroke={GREEN} fill="none" />
        <path d={binaryPath(RAND, 254, 266)} stroke={GREEN} fill="none" />
        <path d={binaryPath(COLA, 271, 283)} stroke={GREEN} fill="none" />
        <path d={binaryPath(MONEY, 288, 300)} stroke={GREEN} fill="none" />
        <Bus top={305} items={STATE} color={PALE} />
        <Bus top={322} items={PIMONEY} color={PALE} start="10" startX={X0 - 6} />
        <path d={clockPath(357, 368)} stroke={GREEN} fill="none" />
        <path d={`M${X0} 373H${X1}`} stroke={GREEN} />
        <path d={binaryPath(ONE, 390, 402)} stroke={GREEN} fill="none" />
        <path d={binaryPath(HALF, 407, 419)} stroke={GREEN} fill="none" />
        <path d={binaryPath(MONEY, 424, 436)} stroke={GREEN} fill="none" />
        <path d={binaryPath(COLA, 441, 453)} stroke={GREEN} fill="none" />
        <Bus top={458} items={DIFF} color={PALE} start="-2" />
        <Bus top={475} items={DELTA} color={PALE} />
        <Bus top={492} items={FSM} color="#ff0000" />
      </g>
      <rect x="890" y="557" width="995" height="2" fill="#f0f0f0" />
      <g transform="translate(.5 0)">
        {ticks.map((i) => {
          const x = Math.round(902 + 15.32 * i)
          const major = (i + 1) % 5 === 0
          return <path key={i} d={`M${x} ${major ? 560 : 563}V567`} stroke="#00e000" />
        })}
      </g>
      {labels.map((t, i) => (
        <text key={t} transform={`translate(${963 + 153.3 * i} 580) scale(0.9 1)`} textAnchor="middle" fill="#00e800" fontSize="12" fontFamily="'Liberation Sans',sans-serif">
          {t}
        </text>
      ))}
      <rect x="890" y="582" width="995" height="1" fill="#8a8a8a" />
    </svg>
  )
}

const WavePanel = () => (
  <div className="flex-1 min-w-0 h-[501px] ml-[10px] flex flex-col bg-[#f0f0f0] overflow-hidden">
    <div className="h-[21px] flex items-center shrink-0">
      <svg viewBox="0 0 16 16" className="ml-[5px] w-[15px] h-[15px] shrink-0">
        <rect x="0.500" y="0.500" width="15" height="15" fill="#eee" stroke="#555" />
        <rect x="2" y="4" width="12" height="10" fill="#000" />
        <path d="M3 7h3v3h3V7h4M3 12h10" stroke="#20e040" fill="none" />
      </svg>
      <span className="ml-[2px] w-[79px] shrink-0 whitespace-nowrap">Wave - Default</span>
      <Grip w="w-[1151px]" />
      <span className="ml-[6px] font-bold text-[15px] leading-none">+</span>
    </div>
    <div className="flex ml-[3px] flex-1 min-h-0">
      <div className="w-[160px] flex flex-col shrink-0">
        <div className="h-[20px] bg-[#808080] flex items-center shrink-0 pl-[10px]">
          <svg viewBox="0 0 16 16" className="w-[16px] h-[16px]">
            <path d="M5 0l5 5-5 5-5-5z" fill="#9a30c0" />
            <rect x="7" y="2" width="7" height="7" fill="#20b080" />
            <path d="M5 7l6 4-6 5-5-5z" fill="#1060e0" />
            <circle cx="9" cy="6" r="3" fill="#30d8f0" />
          </svg>
          <div className="ml-[3px]"><Caret w="w-[8px]" /></div>
        </div>
        <div className="h-[3px] bg-white shrink-0" />
        {waveRows.map((r, i) => (
          <div key={i} className="h-[17px] flex shrink-0">
            <div className="w-[9px] bg-[#f4f4f4] shrink-0" />
            <div className="flex-1 bg-black border-b border-[#777] flex items-center text-white min-w-0">
              {r.group ? (
                <>
                  <div className="ml-[2px] w-[18px] border-t border-white shrink-0" />
                  <span className="ml-[5px] shrink-0 pt-[1px]">{r.name}</span>
                  <div className="ml-[5px] flex-1 border-t border-white" />
                </>
              ) : (
                <>
                  <div className="ml-[5px] w-[15px] flex items-center shrink-0">
                    {r.plus && <PlusBox />}
                  </div>
                  <Diamond tone={r.tone} arrow={r.arrow} />
                  {r.dots && (
                    <div className="relative w-[16px] h-[14px] shrink-0">
                      <div className="absolute left-[1px] top-[1px] w-[4px] h-[4px] rounded-full bg-cyan-300" />
                      <div className="absolute left-[9px] bottom-0 w-[4px] h-[4px] rounded-full bg-cyan-300" />
                    </div>
                  )}
                  <span className="ml-[4px] pt-[1px] whitespace-nowrap">{r.name}</span>
                </>
              )}
            </div>
          </div>
        ))}
        <div className="h-[51px] flex shrink-0">
          <div className="w-[9px] bg-[#f4f4f4]" />
          <div className="flex-1 bg-[#808080]" />
        </div>
        <div className="h-[2px] bg-white shrink-0" />
        <div className="h-[23px] bg-[#808080] flex items-center shrink-0 pl-[10px] text-[#e8e8e8]">
          <svg viewBox="0 0 36 12" className="w-[36px] h-[12px] shrink-0">
            <path d="M1 11V7h3l2-5h2l2 5h1v4z" fill="#a8b8d0" />
            <rect x="12" y="1" width="11" height="10" fill="#5a90d8" stroke="#cfe0f4" />
            <path d="M14 4h7M14 7h5" stroke="#fff" />
            <circle cx="30" cy="6" r="5.500" fill="#4aa84a" stroke="#cfe8cf" />
            <path d="M27 6h6M30 3v6" stroke="#e8ffe8" />
          </svg>
          <span className="ml-auto mr-[10px]">Now</span>
        </div>
        <div className="h-[17px] flex shrink-0">
          <div className="w-[49px] bg-[#808080] flex items-center pl-[12px]">
            <svg viewBox="0 0 36 12" className="w-[36px] h-[12px] shrink-0">
              <path d="M3 5V3Q3 1 5 1T7 3V5" stroke="#e8b84a" fill="none" />
              <rect x="1" y="5" width="9" height="7" fill="#e8b84a" />
              <path d="M13 11 19 5M18 2l4 3" stroke="#9ab8e0" strokeWidth="2" />
              <circle cx="30" cy="6" r="5" fill="#e06060" stroke="#f4c8c8" />
              <path d="M27 6h6" stroke="#fff" />
            </svg>
          </div>
          <div className="flex-1 bg-white text-right pr-[10px] leading-[17px] text-[#111]">Cursor 1</div>
        </div>
        <div className="h-[4px] bg-[#e8e8e8] shrink-0" />
        <div className="h-[16px] pl-[9px] bg-[#808080] shrink-0">
          <ScrollBar thumb="w-[60px]" h="h-[16px]" />
        </div>
      </div>
      <div className="w-[2px] bg-white shrink-0" />
      <div className="w-[101px] flex flex-col shrink-0">
        <div className="h-[20px] bg-[#808080] shrink-0 text-right pr-[6px] text-[#ddd] leading-[24px] overflow-hidden">Msgs</div>
        <div className="h-[3px] bg-white shrink-0" />
        {waveRows.map((r, i) => (
          <div key={i} className="h-[17px] bg-black border-b border-[#777] flex items-center text-white pl-[2px] shrink-0">
            {r.group ? <div className="flex-1 border-t border-white" /> : <span className="pt-[1px]">{r.value}</span>}
          </div>
        ))}
        <div className="h-[51px] bg-[#808080] shrink-0" />
        <div className="h-[2px] bg-white shrink-0" />
        <div className="h-[23px] bg-[#808080] text-[#e8e8e8] text-right pr-[10px] leading-[23px] shrink-0">10 us</div>
        <div className="h-[17px] bg-white text-right pr-[10px] leading-[17px] text-[#111] shrink-0">9.64 us</div>
        <div className="h-[4px] bg-[#e8e8e8] shrink-0" />
        <ScrollBar thumb="w-[1px]" dim h="h-[16px]" />
      </div>
      <div className="w-[2px] bg-white shrink-0" />
      <div className="flex-1 min-w-0 flex flex-col">
        <WaveChart />
        <div className="h-[4px] bg-[#6e6e6e] shrink-0" />
        <div className="h-[16px] bg-[#c4c4c4] flex items-center shrink-0 pl-[2px]">
          <div className="w-[14px] h-[16px] bg-[#f0f0f0] border border-white border-b-[#888] border-r-[#888] flex items-center justify-center">
            <Triangle dir="l" />
          </div>
          <div className="ml-[884px] w-[31px] h-[16px] bg-[#efefef] border border-white border-b-[#888] border-r-[#888]" />
          <div className="ml-[24px] w-px h-[14px] bg-[#e8c030]" />
          <div className="ml-[36px] w-[4px] h-[16px] bg-[#efefef]" />
        </div>
      </div>
    </div>
  </div>
)

const transcript = [
  [9400, 0, 1, '01', '10000', 0, 0],
  [9420, 1, 0, '10', '00001', 1, 0],
  [9440, 0, 1, '01', '00100', 0, 0],
  [9460, 1, 0, '10', '01000', 0, 0],
  [9480, 1, 0, '10', '00001', 1, 0],
  [9500, 1, 0, '10', '00100', 0, 0],
  [9520, 1, 0, '10', '10000', 0, 0],
  [9540, 0, 1, '01', '00001', 1, 1],
  [9560, 0, 1, '01', '00010', 0, 0],
  [9580, 1, 0, '10', '00100', 0, 0],
  [9600, 0, 1, '01', '10000', 0, 0],
  [9620, 1, 0, '10', '00001', 1, 0],
  [9640, 0, 1, '01', '00100', 0, 0],
  [9660, 1, 0, '10', '01000', 0, 0],
  [9680, 1, 0, '10', '00001', 1, 0],
  [9700, 0, 1, '01', '00100', 0, 0],
]

const menus = ['File', 'Edit', 'View', 'Compile', 'Simulate', 'Add', 'Transcript', 'Tools', 'Layout', 'Bookmarks', 'Window', 'Help']

export default function App() {
  return (
    <div className="relative w-[1885px] h-[898px] overflow-hidden bg-[#f0f0f0] text-[11.5px] text-[#111] font-['Liberation_Sans',Arial,sans-serif] flex flex-col">
      <div className="h-[3px] bg-white shrink-0" />
      <div className="h-[1px] flex shrink-0">
        <div className="w-[1349px] bg-[#3f6f96]" />
        <div className="flex-1 bg-[#0f3a7a]" />
      </div>
      {/* Title bar */}
      <div className="h-[31px] bg-white flex items-center shrink-0">
        <div className="ml-[11px] w-[15px] flex flex-col">
          <div className="h-[3px] bg-[#1010e0] mb-[2px]" />
          <svg viewBox="0 0 15 11" className="w-[15px] h-[11px]">
            <path d="M0 11V0h3l4.500 5L12 0h3v11h-3V5L7.500 9.500 3 5v6z" fill="#111" />
          </svg>
        </div>
        <span className="ml-[6px] text-[12.5px] text-[#222]">ModelSim SE-64 10.1c</span>
        <div className="ml-auto w-[10px] border-t border-black mr-[35px]" />
        <div className="w-[10px] h-[10px] border border-black mr-[26px]" />
      </div>
      {/* Menu */}
      <div className="h-[20px] bg-white flex items-center gap-[14.5px] pl-[10px] text-[13px] text-[#111] shrink-0">
        <span className="w-[19px]">{menus[0]}</span>
        {menus.slice(1).map((m) => (
          <span key={m}>{m}</span>
        ))}
      </div>
      <Toolbars />
      {/* Panels */}
      <div className="h-[514px] flex pt-[2px] bg-[#d6d6d6] shrink-0">
        <SimPanel />
        <ObjectsPanel />
        <WavePanel />
      </div>
      {/* Transcript */}
      <div className="h-[18px] bg-[#a6c5de] flex items-center shrink-0">
        <svg viewBox="0 0 14 16" className="ml-[7px] w-[13px] h-[15px] shrink-0">
          <path d="M1 16V4Q1 0 7 0T13 4V16H10V6H4V16z" fill="#666" />
          <rect x="4" y="6" width="6" height="10" fill="#ddd" />
        </svg>
        <span className="ml-[4px] w-[56px] shrink-0">Transcript</span>
        <Grip w="w-[1801px]" dark />
      </div>
      <div className="flex-1 bg-white border-l-2 border-[#555] ml-[5px] pl-[3px] pt-[3px] font-['Liberation_Mono',monospace] text-[11.67px] leading-[15px] text-[#0808f0] whitespace-pre overflow-hidden">
        {transcript.map((t) => (
          <div key={t[0]}>
            {`# @time ${t[0]}ns: pi_money_one=${t[1]} pi_money_half=${t[2]} pi_money=${t[3]} state=${t[4]} po_cola=${t[5]} po_money=${t[6]}`}
          </div>
        ))}
      </div>
      {/* Red annotations from the screenshot author */}
      <div className="absolute left-0 top-[4px] w-[2px] h-[51px] bg-[#aaaaaa]" />
      <div className="absolute left-[622px] top-[156px] w-[283px] h-[30px] border-[3px] border-[#ef4f4f] rounded-[6px]" />
      <div className="absolute left-[628px] top-[327px] w-[270px] h-[38px] border-[3px] border-[#ef4f4f] rounded-[6px]" />
      <div className="absolute left-[877px] top-[480px] w-[145px] h-[36px] border-[3px] border-[#ef4f4f] rounded-[6px]" />
      <div className="absolute left-[8px] top-[651px] w-[646px] h-[52px] border-[3px] border-[#ef4f4f] rounded-[6px]" />
      <div className="absolute left-[1788px] top-[873px] text-[12px] text-[#8a8a8a] font-['Liberation_Sans','Noto_Sans_CJK_SC',sans-serif]">
        CSDN @比特Z
      </div>
    </div>
  )
}
